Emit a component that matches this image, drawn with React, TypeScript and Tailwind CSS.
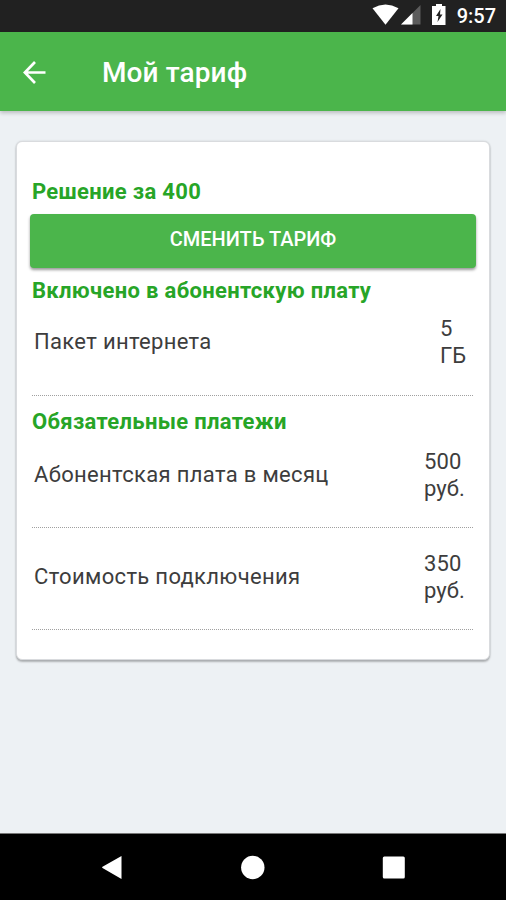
type RowProps = { label: string; amount: string; unit: string; valueClass: string; className: string };

function TariffRow({ label, amount, unit, valueClass, className }: RowProps) {
  return (
    <div className={`mr-4 ml-[15px] flex items-center justify-between border-b border-dotted border-[#a0a0a0] pl-[2px] text-[22px] leading-[27px] tracking-[0.33px] text-[#3d3d3d] ${className}`}>
      <span className="whitespace-nowrap">{label}</span>
      <span className={`relative top-px flex flex-col tracking-[0.1px] ${valueClass}`}>
        <span>{amount}</span>
        <span>{unit}</span>
      </span>
    </div>
  );
}

function StatusBar() {
  return (
    <div className="flex h-8 shrink-0 items-center justify-end bg-[#212121] pr-[10px] text-white">
      <svg width="76" height="32" viewBox="0 0 76 32" className="shrink-0">
        <path d="M0.500 8.2Q13.500 0.800 26.500 8.2L13.500 24.800Z" fill="#fff" />
        <path d="M48.500 5V24.500H29Z" fill="#5c5c5c" />
        <path d="M40.500 13V24.500H29Z" fill="#fff" />
        <path d="M64 4H70V6H73.500V25H60V6H64Z" fill="#fff" />
        <path d="M68.500 9L64 16H66.500L65.500 22L70.500 14.500H68Z" fill="#212121" />
      </svg>
      <span className="ml-[9px] text-[20px] leading-8 font-medium">9:57</span>
    </div>
  );
}

export default function App() {
  return (
    <div className="flex h-[900px] w-[506px] flex-col overflow-hidden bg-[#edf1f4] font-['Roboto',sans-serif]">
      <StatusBar />
      <header className="flex h-[79px] shrink-0 items-center bg-[#4bb54b] pt-[3px] shadow-[0_2px_4px_rgba(0,0,0,0.22)]">
        <svg width="24" height="24" viewBox="0 0 24 24" className="ml-[23px] shrink-0" fill="none" stroke="#fff" strokeWidth="2.700">
          <path d="M22.500 11.500H2M12 1L1.800 11.500L12 22" />
        </svg>
        <h1 className="ml-[55px] text-[28px] leading-8 font-medium tracking-[0.1px] text-white">Мой тариф</h1>
      </header>
      <main className="flex-1 px-4 pt-[30px]">
        <section className="flex h-[519px] flex-col rounded-md border border-[#d9dbde] bg-white shadow-[0_2px_2px_rgba(0,0,0,0.25),0_0_2px_rgba(0,0,0,0.15)]">
          <h2 className="mt-[36px] ml-[15px] text-[22px] leading-[28px] font-bold tracking-[0.32px] text-[#27a527]">Решение за 400</h2>
          <button className="mx-[13px] mt-[8px] h-[54px] shrink-0 rounded-[4px] bg-[#4bb54b] pb-[4px] text-[20px] font-medium text-white shadow-[0_2px_3px_rgba(0,0,0,0.4)]">
            СМЕНИТЬ ТАРИФ
          </button>
          <h2 className="mt-[9px] ml-[15px] text-[22px] leading-[28px] font-bold tracking-[0.32px] text-[#27a527]">Включено в абонентскую плату</h2>
          <TariffRow label="Пакет интернета" amount="5" unit="ГБ" valueClass="w-[33px]" className="h-[91px] pb-[18px]" />
          <h2 className="mt-[12px] ml-[15px] text-[22px] leading-[28px] font-bold tracking-[0.32px] text-[#27a527]">Обязательные платежи</h2>
          <TariffRow label="Абонентская плата в месяц" amount="500" unit="руб." valueClass="w-[49px]" className="h-[92px] pb-[15px]" />
          <TariffRow label="Стоимость подключения" amount="350" unit="руб." valueClass="w-[49px]" className="h-[102px] pb-[5px]" />
        </section>
      </main>
      <nav className="flex h-[67px] shrink-0 items-center border-t border-[#777] bg-black">
        <svg width="506" height="66" viewBox="0 1 506 66" fill="#fff">
          <path d="M102.500 33.800Q101.500 34.300 102.500 35L121.500 46V23Z" />
          <circle cx="252.800" cy="34.500" r="11.700" />
          <rect x="382.800" y="23.500" width="22" height="22" rx="1.500" />
        </svg>
      </nav>
    </div>
  );
}
